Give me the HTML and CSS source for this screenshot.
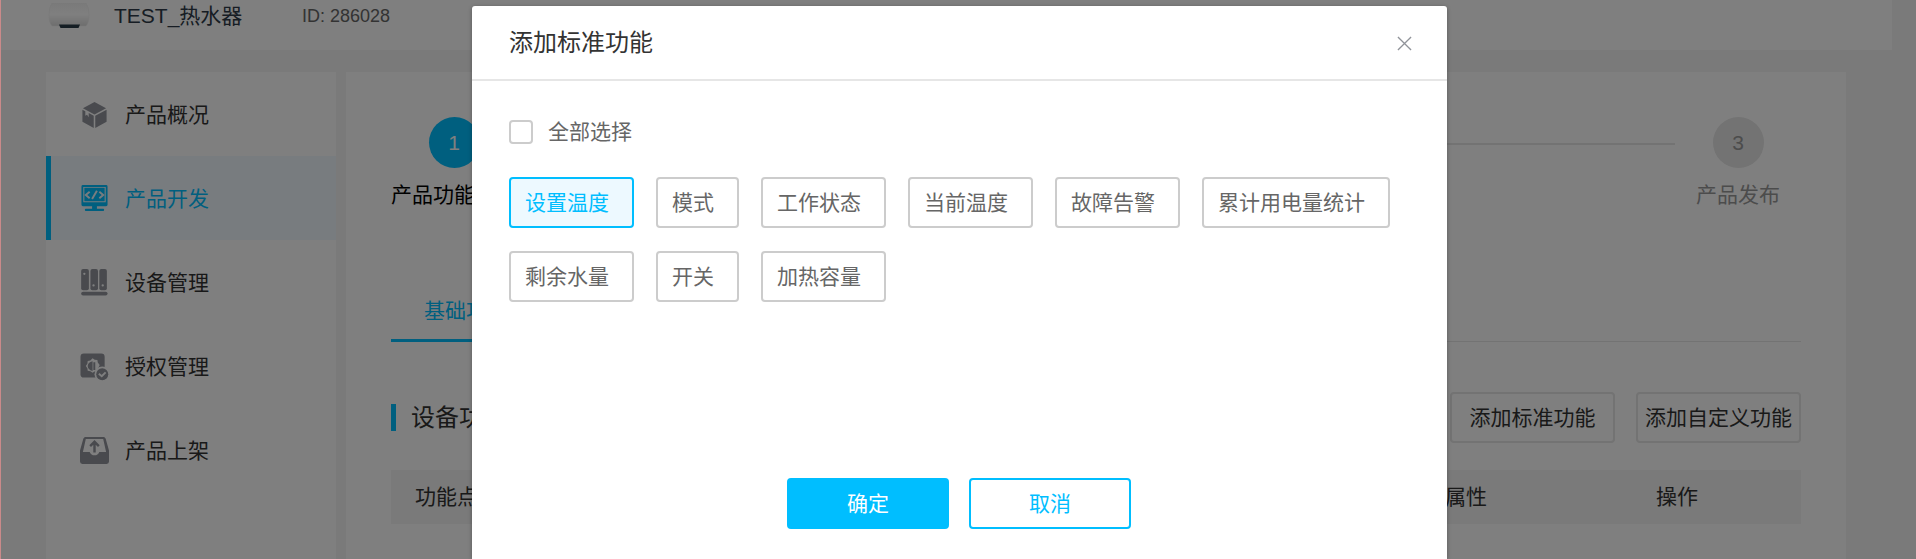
FILE: index.html
```html
<!DOCTYPE html>
<html lang="zh-CN">
<head>
<meta charset="utf-8">
<title>产品开发</title>
<link rel="stylesheet" href="styles.css">
</head>
<body>
<div class="page">
  <header class="topbar">
    <svg class="product-img" viewBox="0 0 42 26">
      <defs><linearGradient id="tank" x1="0" y1="0" x2="0" y2="1"><stop offset="0" stop-color="#f4f4f4"/><stop offset=".5" stop-color="#fff"/><stop offset="1" stop-color="#dcdcdc"/></linearGradient></defs>
      <path d="M4 0h34q3 4 3 12t-3 11H4Q1 20 1 12T4 0z" fill="url(#tank)" stroke="#f0f0f0" stroke-width=".6"/>
      <path d="M11 21.500h21l-1.500 3.500h-18z" fill="#2b3d48"/>
    </svg>
    <span class="product-name">TEST_热水器</span>
    <span class="product-id">ID: 286028</span>
  </header>
  <div class="columns">
    <nav class="sidebar">
      <a class="nav-item">
        <svg class="icon" viewBox="0 0 30 30"><path d="M15 2l12 6.500-12 6.500L3 8.500z"/><path d="M2.500 10l3 1.600v4.800l1.800-1.200 1.700 2.700v-4.500l5.200 2.800V29L2.500 22.500zM27.500 10v12.500L15.800 29V16.200z"/></svg>
        <span>产品概况</span>
      </a>
      <a class="nav-item active">
        <svg class="icon" viewBox="0 0 30 30"><path fill-rule="evenodd" d="M3 1h24q1.500 0 1.500 1.500v19Q28.500 23 27 23h-9.500v2.500H24q1 0 1 1.250T24 28H6q-1 0-1-1.250t1-1.250h6.500V23H3q-1.500 0-1.500-1.500v-19Q1.500 1 3 1zM3.400 3v15.800h23.200V3zM4.500 4h21v13.800h-21z"/><path class="knock" d="M10 8l-4 3.300 4 3.400M20 8l4 3.300-4 3.400M17.500 7l-5 8.500"/></svg>
        <span>产品开发</span>
      </a>
      <a class="nav-item">
        <svg class="icon" viewBox="0 0 30 30"><rect x="1.200" y="1" width="8" height="22" rx="2"/><rect x="10.800" y="1" width="7.800" height="22" rx="2"/><rect x="20" y="1" width="7.800" height="22" rx="2"/><rect x="1.200" y="24.500" width="27.300" height="4" rx="2"/><g class="hole"><circle cx="4.500" cy="6" r="1.200"/><circle cx="14" cy="18" r="1.200"/><circle cx="23.500" cy="18" r="1.200"/></g></svg>
        <span>设备管理</span>
      </a>
      <a class="nav-item">
        <svg class="icon" viewBox="0 0 30 30"><rect x=".5" y="1.500" width="25" height="25" rx="3.500"/><path class="hole" d="M13 6.500l2.200 1.500 2.800.3.400 2.500 2 2.700-1.300 2.500-2 4-2 .2-2.100 1.300-2.300-1.600-2.700-.4-.4-2.700L6 14.500l1.600-2.400.4-2.800 2.700-.4z"/><path d="M13 9.500v10.200Q8 18.500 8 14.600T13 9.500zM13.800 10.500h2v8h-2z"/><circle class="hole" cx="23" cy="23" r="8"/><circle cx="23" cy="23" r="6.200"/><path class="knock" d="M19.500 22.500l3 2.600 4-4"/></svg>
        <span>授权管理</span>
      </a>
      <a class="nav-item">
        <svg class="icon" viewBox="0 0 30 30"><path fill-rule="evenodd" d="M5 1h20l1.500 1.500L30 15v11.500q0 2.500-2.500 2.500h-25Q0 29 0 26.500V15L3.500 2.500zM6 3L3 16.500h7Q11.500 20 15 20t5-3.500h7L24 3z"/><path class="line" d="M15 17V6.500M10.500 10.500L15 6l4.500 4.500"/></svg>
        <span>产品上架</span>
      </a>
    </nav>
    <main class="content">
      <div class="steps">
        <div class="step current"><span class="dot">1</span><span>产品功能定义</span></div>
        <div class="step-line"></div>
        <div class="step"><span class="dot">3</span><span>产品发布</span></div>
      </div>
      <div class="tabs"><span class="tab">基础功能</span></div>
      <div class="section-head">
        <h2>设备功能</h2>
        <div class="actions"><button class="ghost">添加标准功能</button><button class="ghost">添加自定义功能</button></div>
      </div>
      <div class="table-head"><span>功能点</span><span>属性</span><span>操作</span></div>
    </main>
  </div>
</div>
<div class="overlay">
  <section class="modal">
    <header class="modal-head">
      <h1>添加标准功能</h1>
      <svg class="close" viewBox="0 0 16 16"><path d="M1 1l14 14M15 1L1 15"/></svg>
    </header>
    <label class="check-all"><span class="box"></span><span>全部选择</span></label>
    <div class="tags">
      <span class="tag selected">设置温度</span><span class="tag">模式</span><span class="tag">工作状态</span><span class="tag">当前温度</span><span class="tag">故障告警</span><span class="tag">累计用电量统计</span><span class="tag">剩余水量</span><span class="tag">开关</span><span class="tag">加热容量</span>
    </div>
    <footer class="modal-foot"><button class="btn primary">确定</button><button class="btn">取消</button></footer>
  </section>
</div>
</body>
</html>
```
FILE: styles.css
```css
* { box-sizing: border-box; }
html { overflow: hidden; }
body {
  margin: 0;
  height: 559px;
  overflow: hidden;
  position: relative;
  border-left: 1px solid #ca8a8a;
  background: #f4f4f4;
  font: 400 21px/30px "Liberation Sans", "Noto Sans CJK SC", sans-serif;
  color: #333;
}
h1, h2 { margin: 0; font-size: 24px; font-weight: 400; }
button { font: inherit; padding: 0; }

/* page behind the dialog */
.page { height: 559px; overflow: hidden; }
.topbar {
  display: flex;
  height: 50px;
  width: 1891px;
  padding-left: 47px;
  background: #fff;
  line-height: 32px;
}
.product-img { width: 42px; height: 26px; margin-top: 3px; }
.product-name { width: 188px; margin-left: 24px; color: #2e3a48; white-space: nowrap; }
.product-id { font-size: 18px; color: #666; }
.columns { display: flex; gap: 10px; height: 509px; padding: 22px 0 0 45px; }
.sidebar { width: 290px; background: #fff; }
.nav-item {
  display: flex;
  align-items: center;
  gap: 16px;
  height: 84px;
  padding: 1px 0 0 29px;
  border-left: 5px solid transparent;
}
.nav-item.active { color: #00beff; background: #f0f9ff; border-color: #00beff; }
.icon { width: 29px; height: 29px; fill: #92959d; --back: #fff; }
.active .icon { fill: #00beff; --back: #f0f9ff; }
.icon .hole { fill: var(--back); }
.icon .knock { fill: none; stroke: var(--back); stroke-width: 2; }
.icon .line { fill: none; stroke: #92959d; stroke-width: 2.500; }

.content { width: 1500px; padding: 45px 45px 0; background: #fff; }
.steps { display: flex; height: 167px; }
.step { display: flex; flex-direction: column; align-items: center; gap: 12px; width: 126px; color: #999; white-space: nowrap; }
.step.current { color: #000; }
.dot { width: 51px; height: 51px; border-radius: 50%; background: #e6e6e6; line-height: 51px; text-align: center; }
.current .dot { background: #00beff; color: #fff; }
.step-line { flex: 1; height: 2px; margin: 26px 0 0 17px; background: #e6e6e6; }
.tabs { height: 58px; border-bottom: 1px solid #e6e6e6; }
.tab {
  display: block;
  width: 150px;
  height: 58px;
  border-bottom: 3px solid #00beff;
  color: #00beff;
  line-height: 54px;
  text-align: center;
}
.section-head { display: flex; justify-content: space-between; align-items: center; margin-top: 50px; }
.section-head h2 { height: 27px; padding-left: 15px; border-left: 5px solid #00beff; line-height: 27px; }
.actions { display: flex; gap: 21px; }
.ghost { width: 165px; height: 51px; border: 2px solid #e6e6e6; border-radius: 4px; background: #fff; color: #333; white-space: nowrap; }
.table-head {
  display: grid;
  grid-template-columns: 1030px 211px 1fr;
  height: 54px;
  margin-top: 27px;
  padding-left: 24px;
  background: #f4f4f4;
  line-height: 54px;
}

/* dialog */
.overlay { position: absolute; inset: 0; overflow: hidden; padding: 6px 0 0 471px; background: rgba(0, 0, 0, .5); }
.modal {
  width: 975px;
  height: 553px;
  border-radius: 3px 3px 0 0;
  background: #fff;
  box-shadow: 0 1px 4px rgba(0, 0, 0, .3);
  color: #666;
}
.modal-head {
  display: flex;
  align-items: center;
  justify-content: space-between;
  height: 75px;
  padding: 0 35px 0 37px;
  border-bottom: 2px solid #e6e6e6;
}
.modal-head h1 { color: #333; }
.close { width: 15px; height: 15px; margin-top: 2px; fill: none; stroke: #909399; stroke-width: 1.400; }
.check-all { display: flex; align-items: center; gap: 15px; height: 24px; margin: 39px 0 0 37px; }
.box { width: 24px; height: 24px; border: 2px solid #ccc; border-radius: 4px; }
.tags { display: flex; flex-wrap: wrap; gap: 23px 22px; margin: 33px 37px 0; }
.tag { height: 51px; padding: 0 23px 0 14px; border: 2px solid #ccc; border-radius: 4px; line-height: 48px; }
.tag.selected { border-color: #00beff; background: #edf9ff; color: #00beff; }
.modal-foot { display: flex; justify-content: center; gap: 20px; margin-top: 176px; padding-right: 1px; }
.btn { width: 162px; height: 51px; border: 2px solid #00beff; border-radius: 4px; background: #fff; color: #00beff; }
.primary { background: #00beff; color: #fff; }
```
